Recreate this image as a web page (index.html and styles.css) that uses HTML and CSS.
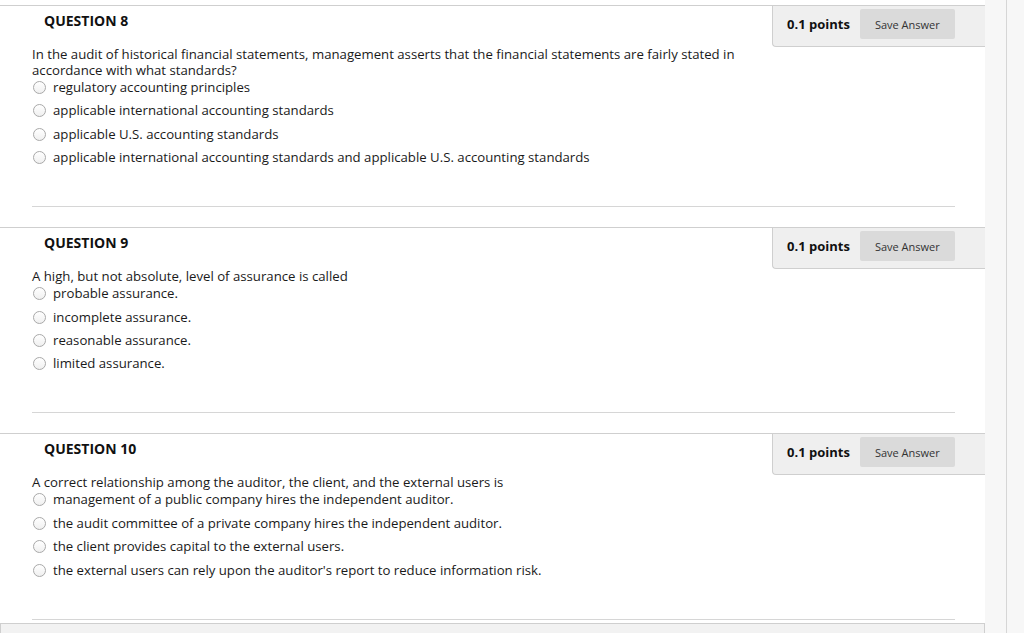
FILE: index.html
```html
<!DOCTYPE html>
<html lang="en">
<head>
<meta charset="utf-8">
<title>Quiz</title>
<link rel="stylesheet" href="styles.css">
</head>
<body>
<div class="page">
  <main class="main">
    <section class="question">
      <div class="points-box"><span class="points">0.1 points</span><button class="save">Save Answer</button></div>
      <h2 class="q-title">QUESTION 8</h2>
      <p class="q-text">In the audit of historical financial statements, management asserts that the financial statements are fairly stated in accordance with what standards?</p>
      <ul class="options">
        <li><span class="radio"></span>regulatory accounting principles</li>
        <li><span class="radio"></span>applicable international accounting standards</li>
        <li><span class="radio"></span>applicable U.S. accounting standards</li>
        <li><span class="radio"></span>applicable international accounting standards and applicable U.S. accounting standards</li>
      </ul>
      <hr class="sep">
    </section>
    <section class="question">
      <div class="points-box"><span class="points">0.1 points</span><button class="save">Save Answer</button></div>
      <h2 class="q-title">QUESTION 9</h2>
      <p class="q-text">A high, but not absolute, level of assurance is called</p>
      <ul class="options">
        <li><span class="radio"></span>probable assurance.</li>
        <li><span class="radio"></span>incomplete assurance.</li>
        <li><span class="radio"></span>reasonable assurance.</li>
        <li><span class="radio"></span>limited assurance.</li>
      </ul>
      <hr class="sep">
    </section>
    <section class="question">
      <div class="points-box"><span class="points">0.1 points</span><button class="save">Save Answer</button></div>
      <h2 class="q-title">QUESTION 10</h2>
      <p class="q-text">A correct relationship among the auditor, the client, and the external users is</p>
      <ul class="options">
        <li><span class="radio"></span>management of a public company hires the independent auditor.</li>
        <li><span class="radio"></span>the audit committee of a private company hires the independent auditor.</li>
        <li><span class="radio"></span>the client provides capital to the external users.</li>
        <li><span class="radio"></span>the external users can rely upon the auditor's report to reduce information risk.</li>
      </ul>
      <hr class="sep sep-last">
    </section>
    <div class="footer-bar"></div>
  </main>
  <aside class="side"><div class="side-line"></div></aside>
</div>
</body>
</html>
```

FILE: styles.css
```css
html, body {
  margin: 0;
  padding: 0;
  background: #fff;
  height: 100%;
  overflow: hidden;
}
body {
  font-family: "Open Sans", "Liberation Sans", sans-serif;
  color: #1a1a1a;
  font-size: 13.2px;
}
.page {
  display: flex;
  height: 633px;
}
.main {
  width: 985px;
  flex: none;
  padding-top: 5px;
}
.side {
  flex: 1;
  background: #f7f7f7;
  display: flex;
  padding-left: 21px;
}
.side-line {
  width: 1px;
  background: #d6d6d6;
}
.question {
  border-top: 1px solid #cfcfcf;
  margin-bottom: 20px;
}
.points-box {
  float: right;
  display: flex;
  align-items: center;
  box-sizing: border-box;
  width: 213px;
  height: 41px;
  padding: 0 30px 4px 14px;
  background: #efefef;
  border-left: 1px solid #cfcfcf;
  border-bottom: 1px solid #cfcfcf;
  border-bottom-left-radius: 4px;
}
.points {
  font-weight: 700;
  font-size: 13px;
  color: #111;
  margin-right: 10px;
  white-space: nowrap;
}
.save {
  font-family: inherit;
  font-size: 11px;
  color: #333;
  background: #dadada;
  border: none;
  border-radius: 2px;
  width: 95px;
  height: 30px;
  padding: 0;
}
.q-title {
  margin: 0;
  padding: 5px 0 0 44px;
  font-size: 14px;
  line-height: 20px;
  font-weight: 700;
  color: #111;
}
.q-text {
  margin: 15px 0 0 32px;
  max-width: 725px;
  line-height: 16px;
}
.options {
  list-style: none;
  margin: 1px 0 0 32px;
  padding: 0;
  display: flex;
  flex-direction: column;
  gap: 7.4px;
}
.options li {
  display: flex;
  align-items: center;
  line-height: 16px;
}
.radio {
  box-sizing: border-box;
  width: 13px;
  height: 13px;
  margin: 1px 7px 0 1px;
  border-radius: 50%;
  border: 1px solid #a9a9a9;
  background: linear-gradient(#ffffff, #f0f0f0);
  flex: none;
}
.sep {
  margin: 41px 30px 0 32px;
  border: none;
  border-top: 1px solid #d6d6d6;
  height: 0;
}
.question:last-of-type {
  margin-bottom: 0;
}
.footer-bar {
  margin-top: 3px;
  height: 20px;
  border: 1px solid #cfcfcf;
  background: #f2f2f2;
}
```
